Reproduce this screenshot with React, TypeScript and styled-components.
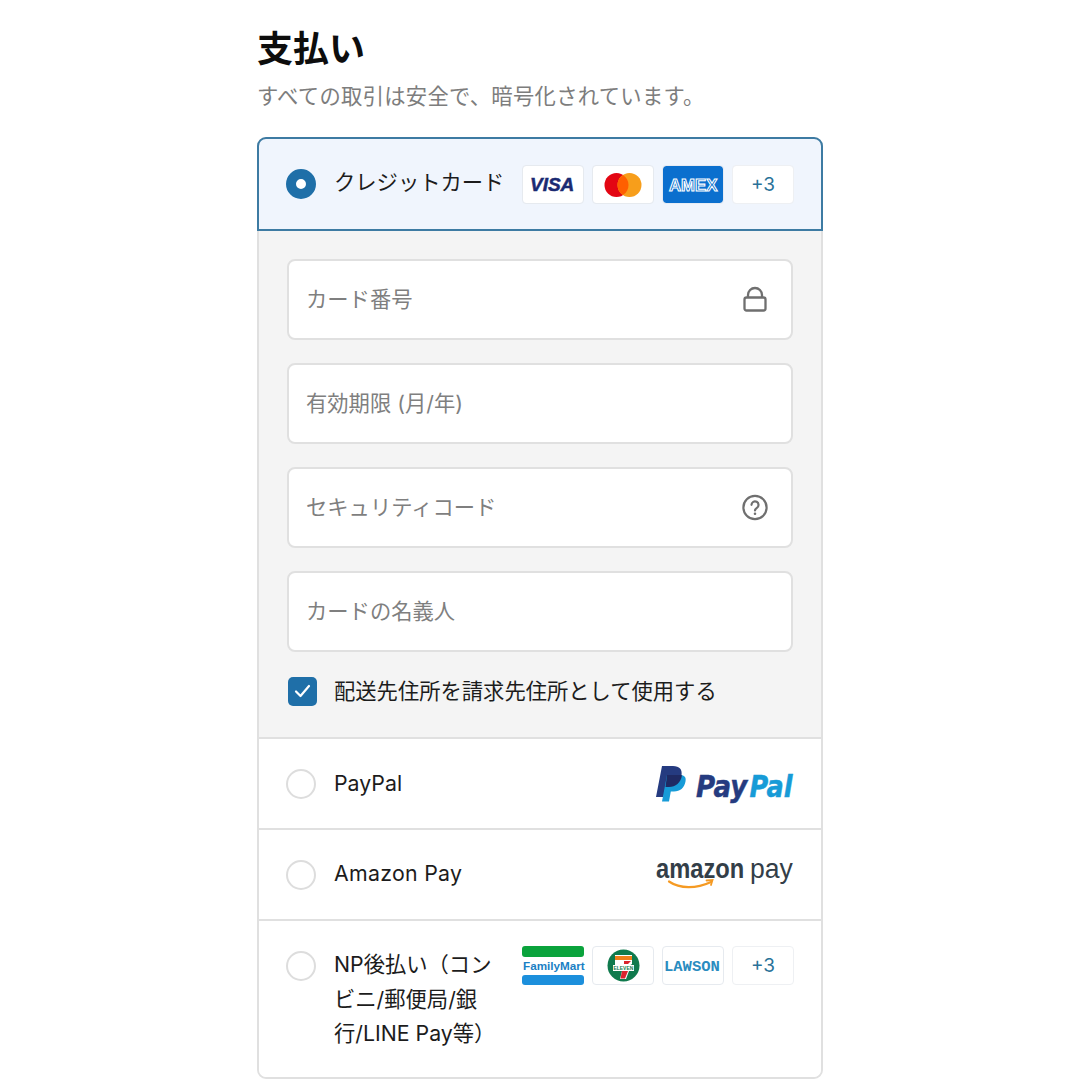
import React from "react";
import styled, { createGlobalStyle } from "styled-components";

const Global = createGlobalStyle`
  html, body { margin: 0; padding: 0; background: #fff; }
  body { font-family: "Inter", "Noto Sans CJK JP", sans-serif; color: #1a1a1a; }
`;

const Page = styled.main`
  width: 566px;
  margin: 0 auto;
  padding-top: 22px;
`;
const Title = styled.h1`
  margin: 0;
  font-size: 36px;
  line-height: 48px;
  font-weight: 700;
  color: #0d0d0d;
  font-family: "Noto Sans CJK JP", sans-serif;
`;
const Subtitle = styled.p`
  margin: 0 0 27px;
  padding-top: 9px;
  font-size: 21.3px;
  line-height: 31px;
  letter-spacing: 0.3px;
  color: #7d7d7d;
  font-family: "Noto Sans CJK JP", sans-serif;
`;
const Card = styled.section`
  border: 2px solid #e0e0e0;
  border-radius: 9px;
  position: relative;
`;
const SelectedRow = styled.div`
  height: 94px;
  box-sizing: border-box;
  margin: -2px -2px 0;
  border: 2px solid #3d7ba3;
  border-radius: 9px 9px 0 0;
  background: #f0f5fd;
  display: flex;
  align-items: center;
  padding: 0 27px;
  gap: 18px;
`;
const Row = styled.div<{ $top?: boolean; $h?: number }>`
  display: flex;
  align-items: ${(p) => (p.$top ? "flex-start" : "center")};
  gap: 18px;
  box-sizing: border-box;
  min-height: ${(p) => p.$h ?? 91}px;
  padding: ${(p) => (p.$top ? "26px 27px 0" : "0 27px")};
  border-top: 2px solid #e0e0e0;
  background: #fff;
  border-radius: ${(p) => (p.$top ? "0 0 8px 8px" : "0")};
`;
const Radio = styled.span<{ $on?: boolean; $offset?: number }>`
  flex: none;
  width: 30px;
  height: 30px;
  box-sizing: border-box;
  border-radius: 50%;
  margin-top: ${(p) => p.$offset ?? 0}px;
  border: ${(p) => (p.$on ? "10px solid #1f6fa8" : "2px solid #dddddd")};
  background: #fff;
`;
const Label = styled.span<{ $lh?: number; $raise?: number; $single?: boolean; $track?: number }>`
  flex: 1;
  min-width: 0;
  font-size: 21.3px;
  line-height: ${(p) => p.$lh ?? 30}px;
  color: #1c1c1c;
  margin-bottom: ${(p) => p.$raise ?? 0}px;
  letter-spacing: ${(p) => p.$track ?? 0}px;
  white-space: ${(p) => (p.$single ? "nowrap" : "normal")};
`;
const Tiles = styled.div<{ $lift?: boolean }>`
  flex: none;
  display: flex;
  gap: 8px;
  margin-top: ${(p) => (p.$lift ? -1 : 1)}px;
`;
const Tile = styled.span<{ $kind?: "plain" | "amex" | "family" }>`
  width: 62px;
  height: 39px;
  box-sizing: border-box;
  display: flex;
  align-items: center;
  justify-content: center;
  border-radius: 4px;
  border: ${(p) => (p.$kind === "family" ? "none" : p.$kind === "amex" ? "1.5px solid #e6ebf3" : "1.5px solid #e6eaef")};
  background: ${(p) => (p.$kind === "amex" ? "#0b6fce" : "#fff")};
  background-clip: padding-box;
`;
const More = styled(Tile)`
  font-size: 19px;
  color: #2a7299;
  border-color: #eef0f3;
`;
const Panel = styled.div`
  background: #f4f4f4;
  padding: 28px 28px 0;
  height: 506px;
  box-sizing: border-box;
  display: flex;
  flex-direction: column;
  gap: 23px;
`;
const Field = styled.div`
  height: 81px;
  box-sizing: border-box;
  flex: none;
  background: #fff;
  border: 2px solid #e0e0e0;
  border-radius: 8px;
  display: flex;
  align-items: center;
  justify-content: space-between;
  padding: 0 23px 0 17px;
`;
const FieldText = styled.span`
  font-size: 21.3px;
  line-height: 30px;
  margin-bottom: 2px;
  color: #7f7f7f;
`;
const Check = styled.label`
  display: flex;
  align-items: center;
  gap: 17px;
  margin: 1px 0 0 1px;
  font-size: 21.3px;
  line-height: 30px;
  color: #1c1c1c;
`;
const Box = styled.span`
  width: 29px;
  height: 29px;
  flex: none;
  border-radius: 5px;
  background: #1f6fa8;
  display: flex;
  align-items: center;
  justify-content: center;
`;
const Logo = styled.svg`
  display: block;
  flex: none;
  overflow: visible;
`;

const Visa = () => (
  <Logo width="46" height="20" viewBox="0 0 46 20">
    <text transform="translate(0 16)" fontFamily="Liberation Sans" fontWeight="700" fontStyle="italic" fontSize="19" fill="#1a2a72" stroke="#1a2a72" strokeWidth="0.5">VISA</text>
  </Logo>
);
const Master = () => (
  <Logo width="38" height="26" viewBox="0 0 38 26">
    <circle cx="12.500" cy="13" r="12" fill="#e30613" />
    <circle cx="25.500" cy="13" r="12" fill="#f79e1b" />
    <path d="M19 2.900a12 12 0 0 1 0 20.200a12 12 0 0 1 0-20.200z" fill="#ff5f00" />
  </Logo>
);
const Amex = () => (
  <Logo width="48" height="20" viewBox="0 0 48 20">
    <text transform="translate(0 16) scale(1.05 1)" fontFamily="Liberation Sans" fontWeight="700" fontSize="16" fill="#0b6fce" stroke="#ffffff" strokeWidth="1">AMEX</text>
  </Logo>
);
const Family = () => (
  <Logo width="62" height="39" viewBox="0 0 62 39">
    <rect width="62" height="11" rx="3" fill="#0aa33c" />
    <rect y="29" width="62" height="10" rx="3" fill="#1c8fdc" />
    <text x="1" y="23.500" fontFamily="Liberation Sans" fontWeight="700" fontSize="11.700" fill="#1b7fc4">FamilyMart</text>
  </Logo>
);
const Seven = () => (
  <Logo width="33" height="33" viewBox="0 0 33 33">
    <circle cx="16.500" cy="16.500" r="16" fill="#0f7a4d" />
    <path d="M8 6h17v9l-3 2v5l-3 8h-6l2-8H8z" fill="#fff" />
    <path d="M8 7h17v4H8z" fill="#ef7f1a" />
    <path d="M17 12h7l-3 3h-4z" fill="#d9232e" />
    <path d="M15 22h6l-3 7.500h-4.500z" fill="#d9232e" />
    <rect x="6" y="16" width="21" height="6" fill="#fff" />
    <text transform="translate(6.500 21) scale(.9 1)" fontFamily="Liberation Sans" fontWeight="700" fontSize="5.500" fill="#0f7a4d">ELEVEN</text>
  </Logo>
);
const Lawson = () => (
  <Logo width="58" height="16" viewBox="0 0 58 16">
    <text x="0" y="12.500" fontFamily="Liberation Mono" fontWeight="700" fontSize="15.500" fill="#2a8cc0">LAWSON</text>
  </Logo>
);
const PayPal = () => (
  <Logo width="138" height="36" viewBox="0 0 138 36">
    <path d="M6 0h11c6.500 0 9.500 3.500 8.500 9.500C24.300 17 19.500 21 13 21H9.500L7.500 31H0z" fill="#253b80" />
    <path d="M11 9h12c5 0 7.500 1.500 6.500 6.500C28.300 22 24 25.500 18 25.500h-3.200L13 35.500H6z" fill="#179bd7" />
    <path d="M9.500 21L11 9h12c1.200 0 2.200.1 3 .3C24.800 16.800 19.500 21 13 21z" fill="#1f2a63" />
    <text transform="translate(40 31) scale(.87 1)" fontFamily="DejaVu Sans" fontWeight="700" fontStyle="italic" fontSize="30" fill="#253b80" stroke="#253b80" strokeWidth="0.500">Pay</text>
    <text transform="translate(93.500 31) scale(.85 1)" fontFamily="DejaVu Sans" fontWeight="700" fontStyle="italic" fontSize="30" fill="#179bd7" stroke="#179bd7" strokeWidth="0.500">Pal</text>
  </Logo>
);
const AmazonPay = () => (
  <Logo width="138" height="40" viewBox="0 0 138 40">
    <text transform="translate(0 23) scale(.846 1)" fontFamily="Liberation Sans" fontWeight="700" fontSize="28" fill="#333e48">amazon</text>
    <text transform="translate(94 23) scale(.95 1)" fontFamily="Liberation Sans" fontSize="28" fill="#333e48">pay</text>
    <path d="M13 26.500c11 7.500 27 7.500 42 .5" fill="none" stroke="#f59a23" strokeWidth="2.200" strokeLinecap="round" />
    <path d="M50.500 25.500l6-.5-1.500 5" fill="none" stroke="#f59a23" strokeWidth="1.800" strokeLinecap="round" />
  </Logo>
);
const LockIcon = () => (
  <Logo width="26" height="26" viewBox="0 0 26 26" fill="none" stroke="#6f6f6f" strokeWidth="2.300">
    <rect x="2.500" y="10.500" width="21" height="13" rx="2" />
    <path d="M6 10.500V8a7 7 0 0 1 14 0v2.500" />
  </Logo>
);
const HelpIcon = () => (
  <Logo width="26" height="26" viewBox="0 0 26 26" fill="none" stroke="#6f6f6f" strokeWidth="2.200">
    <circle cx="13" cy="12.500" r="11.600" />
    <path d="M9.500 9.800a3.500 3.500 0 1 1 5.400 3c-1.200.8-1.900 1.300-1.900 2.700" strokeLinecap="round" />
    <circle cx="13" cy="18.800" r="0.700" fill="#6f6f6f" strokeWidth="1.200" />
  </Logo>
);

export default function App() {
  return (
    <>
      <Global />
      <Page>
        <Title>支払い</Title>
        <Subtitle>すべての取引は安全で、暗号化されています。</Subtitle>
        <Card>
          <SelectedRow>
            <Radio $on />
            <Label $raise={4} $single>クレジットカード</Label>
            <Tiles>
              <Tile><Visa /></Tile>
              <Tile><Master /></Tile>
              <Tile $kind="amex"><Amex /></Tile>
              <More>+3</More>
            </Tiles>
          </SelectedRow>
          <Panel>
            <Field><FieldText>カード番号</FieldText><LockIcon /></Field>
            <Field><FieldText>有効期限 (月/年)</FieldText></Field>
            <Field><FieldText>セキュリティコード</FieldText><HelpIcon /></Field>
            <Field><FieldText>カードの名義人</FieldText></Field>
            <Check>
              <Box>
                <Logo width="17" height="14" viewBox="0 0 17 14" fill="none" stroke="#fff" strokeWidth="2.200">
                  <path d="M2 7.500l4.500 4.500L15 2" strokeLinecap="round" strokeLinejoin="round" />
                </Logo>
              </Box>
              配送先住所を請求先住所として使用する
            </Check>
          </Panel>
          <Row>
            <Radio />
            <Label $raise={2}>PayPal</Label>
            <PayPal />
          </Row>
          <Row>
            <Radio />
            <Label $raise={4} $track={0.3}>Amazon Pay</Label>
            <AmazonPay />
          </Row>
          <Row $top $h={158}>
            <Radio $offset={4} />
            <Label $lh={34.5}>NP後払い（コンビニ/郵便局/銀行/LINE Pay等）</Label>
            <Tiles $lift>
              <Tile $kind="family"><Family /></Tile>
              <Tile><Seven /></Tile>
              <Tile><Lawson /></Tile>
              <More>+3</More>
            </Tiles>
          </Row>
        </Card>
      </Page>
    </>
  );
}
